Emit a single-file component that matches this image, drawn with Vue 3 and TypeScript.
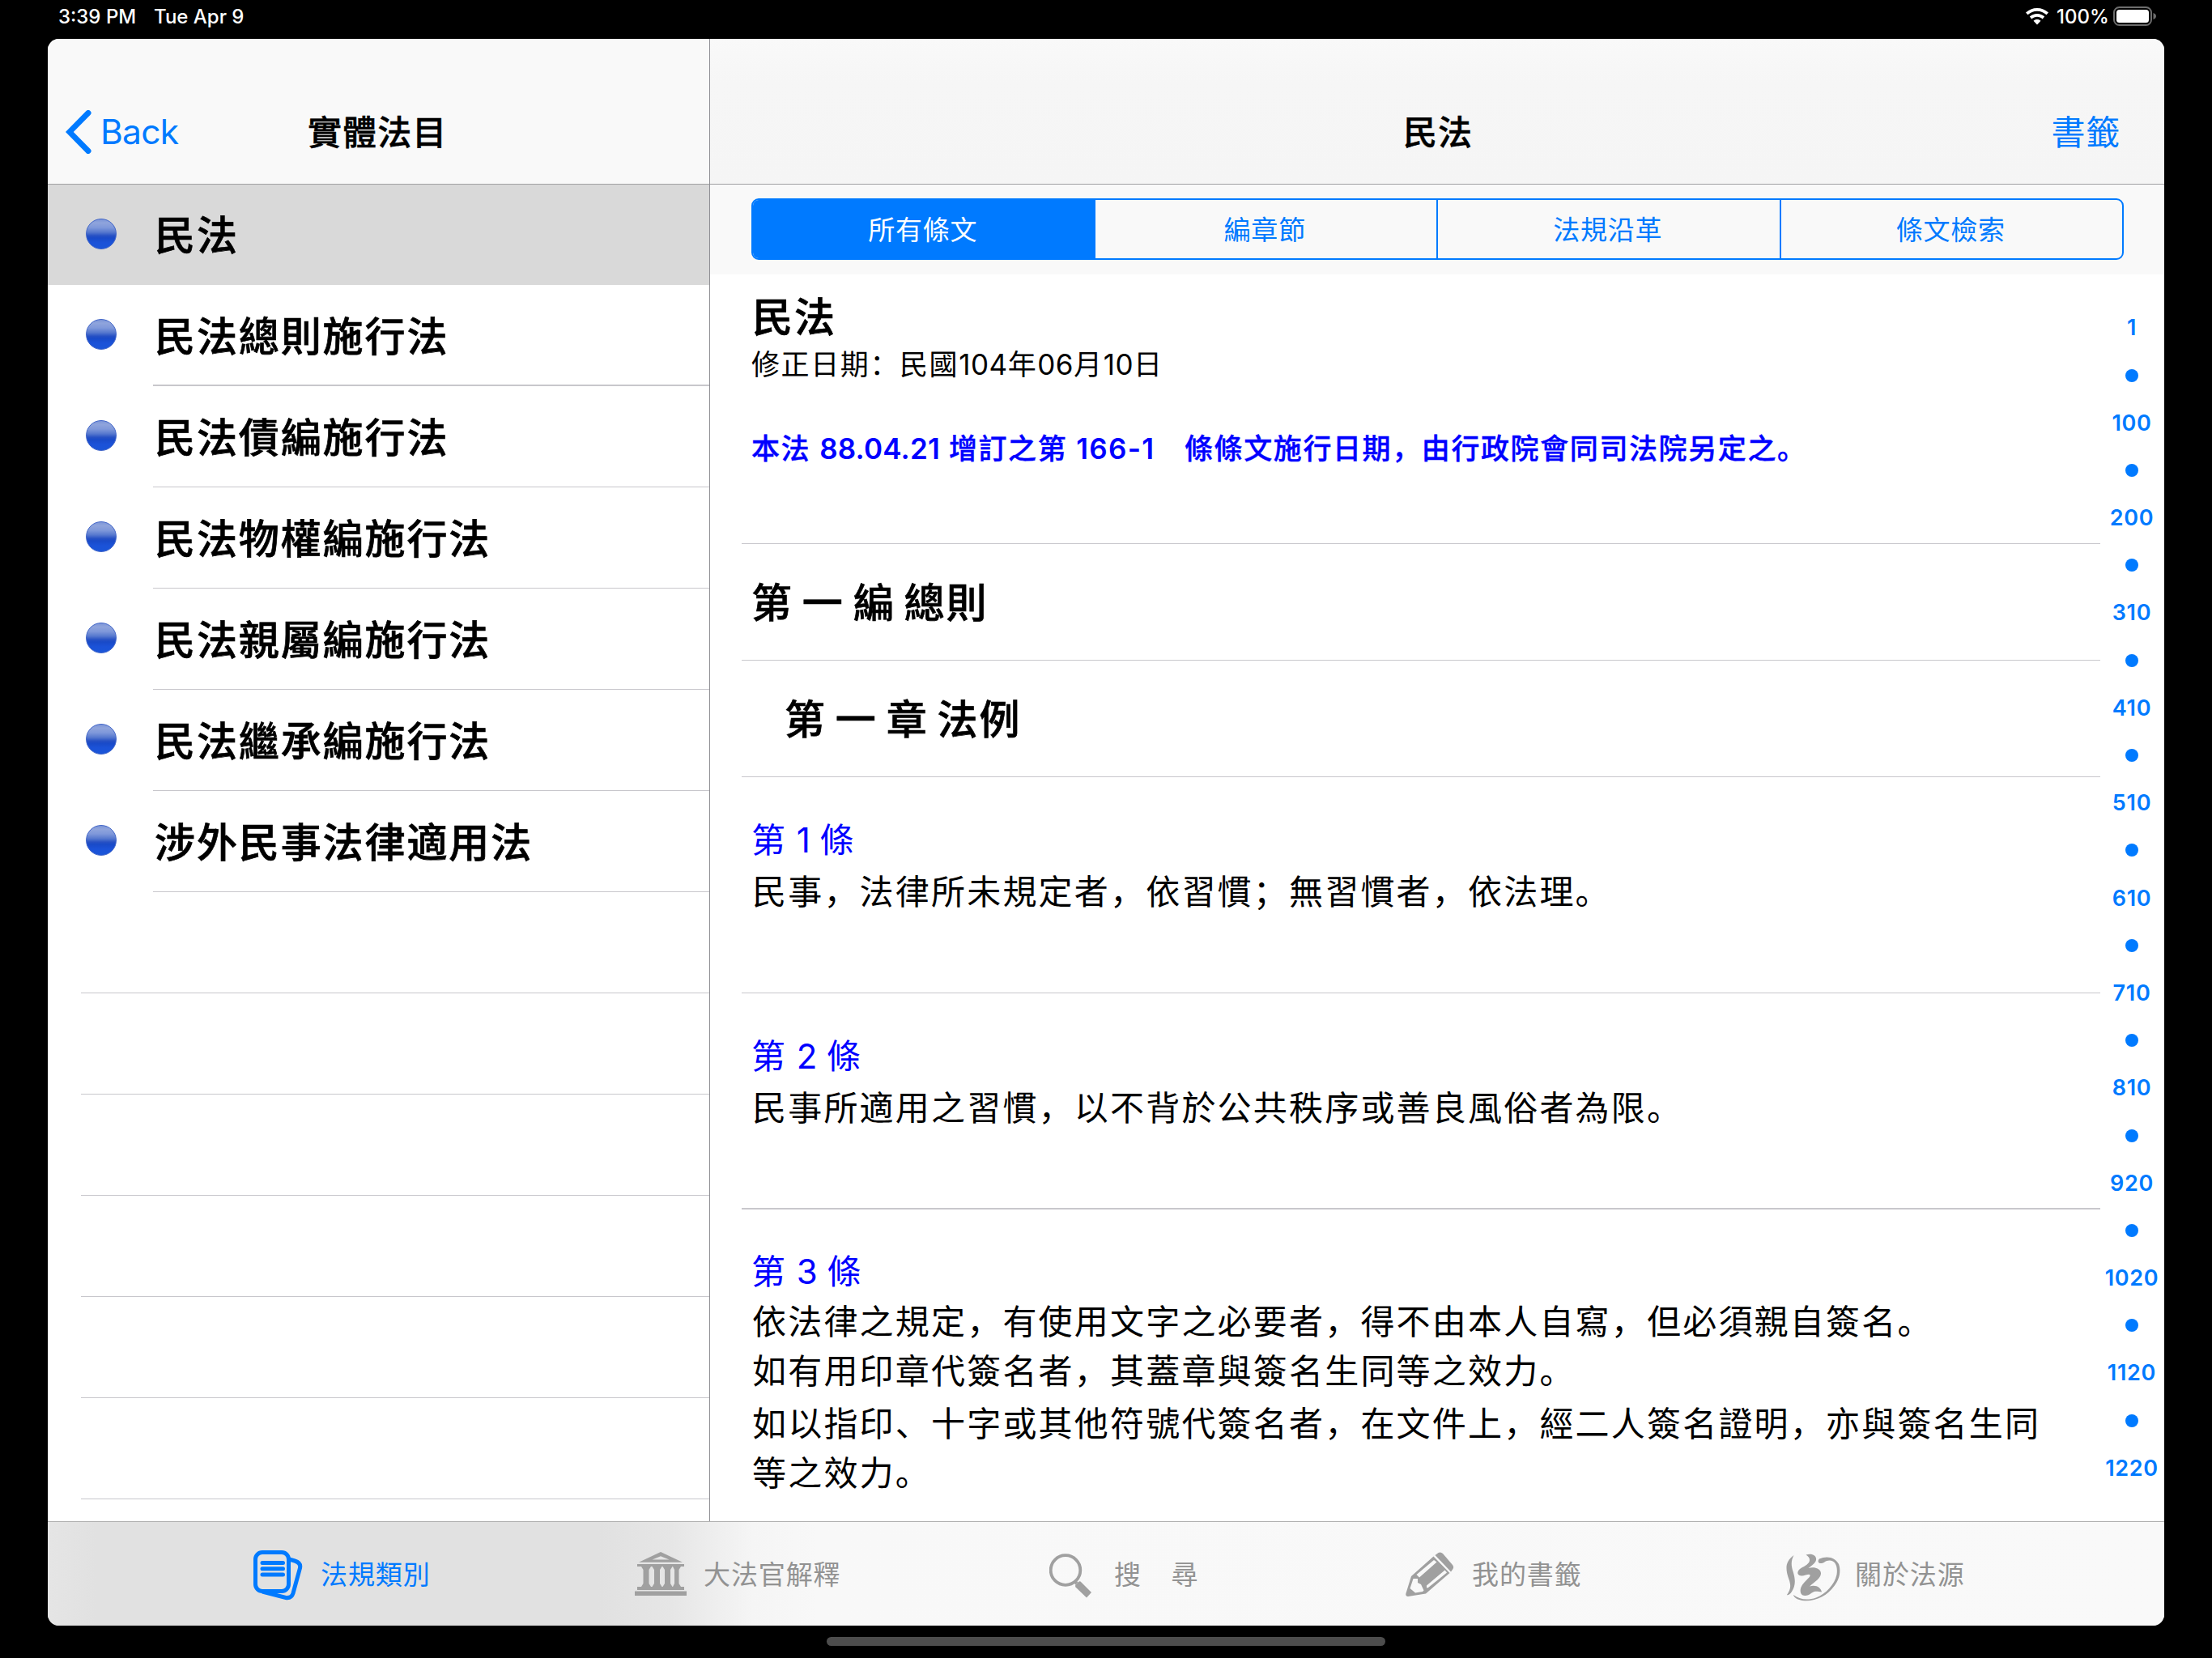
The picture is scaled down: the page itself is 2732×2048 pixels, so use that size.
<script setup lang="ts">
interface Article {
  title: string
  lines: string[]
}

const laws: string[] = [
  '民法',
  '民法總則施行法',
  '民法債編施行法',
  '民法物權編施行法',
  '民法親屬編施行法',
  '民法繼承編施行法',
  '涉外民事法律適用法',
]
const emptyRows = 6

const segments: string[] = ['所有條文', '編章節', '法規沿革', '條文檢索']

const articles: Article[] = [
  { title: '1', lines: ['民事，法律所未規定者，依習慣；無習慣者，依法理。'] },
  { title: '2', lines: ['民事所適用之習慣，以不背於公共秩序或善良風俗者為限。'] },
  {
    title: '3',
    lines: [
      '依法律之規定，有使用文字之必要者，得不由本人自寫，但必須親自簽名。',
      '如有用印章代簽名者，其蓋章與簽名生同等之效力。',
      '如以指印、十字或其他符號代簽名者，在文件上，經二人簽名證明，亦與簽名生同等之效力。',
    ],
  },
]

const stops = [1, 100, 200, 310, 410, 510, 610, 710, 810, 920, 1020, 1120, 1220]
const indexItems: (number | null)[] = stops.flatMap((n, i) => (i ? [null, n] : [n]))
</script>

<template>
  <div class="device">
    <div class="status">
      <span class="time">3:39 PM</span>
      <span class="date">Tue Apr 9</span>
      <svg class="wifi" viewBox="0 0 28 21" width="28" height="21">
        <path fill="#fff" d="M14 0C8.700 0 3.800 2 0 5.600L2.500 8.300C5.600 5.400 9.600 3.700 14 3.700S22.400 5.400 25.500 8.300L28 5.600C24.200 2 19.300 0 14 0Z" />
        <path fill="#fff" d="M14 7C10.600 7 7.300 8.300 4.800 10.600L7.400 13.400C9.200 11.700 11.500 10.700 14 10.700S18.800 11.700 20.600 13.400L23.200 10.600C20.700 8.300 17.400 7 14 7Z" />
        <path fill="#fff" d="M14 14C12.300 14 10.700 14.600 9.500 15.700L14 20.500L18.500 15.700C17.300 14.600 15.700 14 14 14Z" />
      </svg>
      <span class="pct">100%</span>
      <svg class="battery" viewBox="0 0 54 24" width="54" height="24">
        <rect x="1" y="1" width="46" height="22" rx="6.500" fill="none" stroke="#6d6d6d" stroke-width="2" />
        <rect x="4" y="4" width="40" height="16" rx="3.500" fill="#fff" />
        <path d="M49.500 8C51.700 8.700 53 10 53 12S51.700 15.300 49.500 16Z" fill="#6d6d6d" />
      </svg>
    </div>

    <div class="window">
      <div class="split">
        <aside class="master">
          <header class="bar">
            <svg class="chevron" viewBox="0 0 32 54" width="32" height="54">
              <path d="M28 3.500L4.800 27L28 50.500" fill="none" stroke="#007aff" stroke-width="7" stroke-linecap="round" stroke-linejoin="miter" />
            </svg>
            <span class="back">Back</span>
            <span class="bar-title">實體法目</span>
          </header>
          <div v-for="(law, i) in laws" :key="law" class="row" :class="{ selected: i === 0, strong: i === 1 }">
            <i class="bullet"></i>
            <span class="law">{{ law }}</span>
          </div>
          <div v-for="n in emptyRows" :key="n" class="blank"></div>
        </aside>

        <main class="detail">
          <header class="bar detail-bar">
            <span class="detail-title">民法</span>
            <span class="bookmark">書籤</span>
          </header>
          <div class="segbar">
            <div class="seg">
              <span v-for="(s, i) in segments" :key="s" :class="{ on: i === 0 }">{{ s }}</span>
            </div>
          </div>
          <div class="body">
            <div class="content">
              <section class="cell intro">
                <h1>民法</h1>
                <p class="amended">修正日期：民國<b>104</b>年<b>06</b>月<b>10</b>日</p>
                <p class="note">本法 <b>88.04.21</b> 增訂之第 <b class="wide">166-1</b>　條條文施行日期，由行政院會同司法院另定之。</p>
              </section>
              <section class="cell heading">第 一 編 總則</section>
              <section class="cell heading chapter">第 一 章 法例</section>
              <section v-for="a in articles" :key="a.title" class="cell article" :class="'a' + a.title">
                <h2>第 <b>{{ a.title }}</b> 條</h2>
                <p v-for="l in a.lines" :key="l">{{ l }}</p>
              </section>
            </div>
            <nav class="index">
              <span v-for="(n, i) in indexItems" :key="i">
                <template v-if="n !== null">{{ n }}</template>
                <i v-else></i>
              </span>
            </nav>
          </div>
        </main>
      </div>

      <footer class="tabs">
        <div class="tab t1">
          <svg viewBox="0 0 61 62" width="61" height="62" fill="none" stroke="#007aff">
            <path d="M44 11L51 13Q59 15.500 57.500 22L49 53Q47 59.500 40 58.500L11 51" stroke-width="5" />
            <rect x="2.500" y="2.500" width="41" height="48" rx="8.500" stroke-width="5" />
            <path d="M11 15.500H36.500M11 22.800H36.500M11 30H36.500" stroke-width="5" stroke-linecap="round" />
          </svg>
          <span>法規類別</span>
        </div>
        <div class="tab t2">
          <svg viewBox="0 0 64 54" width="64" height="54" fill="#a0a0a0">
            <path fill-rule="evenodd" d="M32 0L59 12.700H5ZM32 5.300L21.500 9.500H42.500Z" />
            <path d="M3 15H61V18H3ZM3 43H61V47H3Z" />
            <path d="M8 18H20L17.500 22V39L20 43H8L10.500 39V22ZM21.500 18H33.500L31 22V39L33.500 43H21.500L24 39V22ZM34.500 18H46.500L44 22V39L46.500 43H34.500L37 39V22ZM47 18H57L54.500 22V39L57 43H47L49 39V22Z" />
            <path d="M0 48.500H64V54H0Z" />
          </svg>
          <span>大法官解釋</span>
        </div>
        <div class="tab t3">
          <svg viewBox="0 0 52 55" width="52" height="55">
            <circle cx="20" cy="20.500" r="18.300" fill="none" stroke="#a0a0a0" stroke-width="3.800" />
            <path d="M31 34L34 37" stroke="#a0a0a0" stroke-width="4" />
            <path d="M38.500 34.500L52 48L46 54.500L32.500 41.500Q31.500 40 32.500 38.500L36 35Q37.300 33.800 38.500 34.500Z" fill="#a0a0a0" />
          </svg>
          <span>搜　尋</span>
        </div>
        <div class="tab t4">
          <svg viewBox="0 0 60 56" width="60" height="56" fill="#a0a0a0">
            <path d="M36.500 4L40.500 1Q43.500 -0.500 46 2L58 16Q60 18.500 58.500 21L56 24.500Z" />
            <path fill-rule="evenodd" d="M34.500 5.500L54.500 26L25 51.500L3 55Q-0.500 55 0.500 51L7 30ZM35 10L13.500 28L17 31.500L38.500 12.500ZM48.500 22.500L26 41.500V44.500L28 44L51 25.500ZM9.500 33L5.500 45L12 50.500L21 49L22.500 47.500L19 40L15 38V33Z" />
          </svg>
          <span>我的書籤</span>
        </div>
        <div class="tab t5">
          <svg viewBox="0 0 68 60" width="68" height="60" fill="#a0a0a0">
            <path d="M10.500 2C7 9 7 14 9.500 22C13 33 12.500 40 8 47C5.500 51 2.500 52 2 51C7 44 7 39 4.500 32C-1 17 1 9 10.500 2Z" />
            <path d="M25.500 1.500C33-1 39 2.500 38 8C37.500 11.500 33 14.500 28.500 18C35 16 43.500 18 44 24C44.500 30 37 34.500 30 40.500C38 38 44 42 45 47.500C39 46.500 36 46 32 49C28 52.500 20.500 53.500 19 48.500C17.500 43 21 38 25 34C29 30 31 28.500 30.500 26.500C29.500 24 22 29 17.500 27C13 24.500 16 19.500 21 17C27 14 30 11 30 8C30 5 28.500 3.500 25.500 1.500Z" />
            <path d="M42 6.500C52 2 62 5 66 13C69 21 67 32 60.500 40C50 55 30 62 15.500 56.500C12 55 10 52.500 10 51C17 56.500 27 58.500 38 54.500C50 50 61 38 63.500 26C65 16 62 8.500 54.500 8.500C49 8.500 48 12.500 43 12C40 11.500 40 8.500 42 6.500Z" />
          </svg>
          <span>關於法源</span>
        </div>
      </footer>
    </div>
    <div class="home"></div>
  </div>
</template>

<style>
html,
body {
  margin: 0;
  background: #000;
}
</style>

<style scoped>
.device {
  width: 2732px;
  height: 2048px;
  overflow: hidden;
  background: #000;
  font-family: 'Inter', 'Noto Sans CJK SC', sans-serif;
  color: #000;
  display: flex;
  flex-direction: column;
}
.device * {
  box-sizing: border-box;
}
b {
  font-weight: inherit;
  letter-spacing: 0;
}
svg {
  display: block;
  flex: none;
}
.status {
  height: 48px;
  flex: none;
  padding: 0 68px 8px 72px;
  display: flex;
  align-items: center;
  color: #fff;
  font-size: 24px;
  font-weight: 500;
  white-space: nowrap;
}
.time {
  width: 118px;
}
.wifi {
  margin-left: auto;
  margin-right: 10px;
}
.pct {
  width: 70px;
}
.window {
  width: 2614px;
  height: 1960px;
  flex: none;
  margin-left: 59px;
  border-radius: 14px;
  overflow: hidden;
  background: #fff;
  display: flex;
  flex-direction: column;
}
.split {
  height: 1831px;
  flex: none;
  display: flex;
}
.master {
  width: 818px;
  border-right: 1px solid #8e8e93;
  flex: none;
}
.bar {
  height: 180px;
  border-bottom: 1px solid #a0a0a2;
  background: #f9f9f9;
  display: flex;
  align-items: center;
  padding: 51px 0 0 22px;
  white-space: nowrap;
}
.back {
  margin-left: 11px;
  width: 256px;
  color: #007aff;
  font-size: 42.500px;
  letter-spacing: -0.700px;
  padding-bottom: 1px;
}
.bar-title,
.detail-title {
  font-size: 42px;
  letter-spacing: 1.100px;
  font-weight: 500;
  padding-bottom: 6px;
  -webkit-text-stroke: 0.500px currentColor;
}
.row {
  height: 125px;
  display: flex;
  align-items: center;
  padding-left: 47px;
  background: linear-gradient(#c8c7cc, #c8c7cc) 130px 100% / 100% 1px no-repeat;
}
.row.strong {
  background-size: 100% 2px;
}
.row.selected {
  height: 124px;
  background: #d9d9d9;
}
.bullet {
  width: 38px;
  height: 38px;
  border-radius: 50%;
  margin-bottom: 3px;
  border: 1px solid #3f64c8;
  background: linear-gradient(#7d96d8 0%, #8fa4dc 12%, #7f98da 28%, #5678ce 44%, #2751c4 56%, #194ac8 64%, #1b52d8 80%, #1a55d8 100%);
}
.law {
  margin-left: 47px;
  padding-bottom: 6px;
  font-size: 50px;
  letter-spacing: 1.900px;
  font-weight: 500;
  white-space: nowrap;
  -webkit-text-stroke: 0.700px currentColor;
}
.blank {
  height: 125px;
  margin-left: 41px;
  border-bottom: 1px solid #c8c7cc;
}
.detail {
  flex: 1;
  min-width: 0;
}
.detail-bar {
  background: linear-gradient(#f9f9f9 0%, #f6f6f6 30%, #f5f5f5 100%);
  padding: 51px 54px 0 856px;
  justify-content: space-between;
}
.bookmark {
  color: #007aff;
  font-size: 42px;
  letter-spacing: 0.700px;
  padding-bottom: 6px;
}
.segbar {
  height: 111px;
  background: #f9f9f9;
  padding: 17px 50px 0 51px;
}
.seg {
  height: 76px;
  border: 2px solid #007aff;
  border-radius: 9px;
  display: flex;
  overflow: hidden;
}
.seg span {
  flex: 1;
  display: flex;
  align-items: center;
  justify-content: center;
  color: #007aff;
  font-size: 33px;
  letter-spacing: 0.800px;
  padding: 0 2px 3px 0;
}
.seg span + span {
  border-left: 2px solid #007aff;
}
.seg .on {
  background: #007aff;
  color: #fff;
  margin-right: -1px;
}
.body {
  display: flex;
  height: 1540px;
}
.content {
  width: 1678px;
  margin-left: 39px;
  overflow: hidden;
}
.cell {
  border-bottom: 1px solid #c8c7cc;
  padding-left: 12px;
}
h1,
h2,
p {
  margin: 0;
  font-weight: 400;
}
.intro {
  height: 333px;
}
h1 {
  font-size: 50px;
  line-height: 60px;
  padding: 23px 0 0 1px;
  letter-spacing: 1.900px;
  font-weight: 500;
  -webkit-text-stroke: 0.700px currentColor;
}
.amended,
.note {
  font-size: 35px;
  line-height: 40px;
  letter-spacing: 1.600px;
  white-space: nowrap;
}
.amended {
  margin-top: 8px;
}
.amended b {
  letter-spacing: 0.500px;
}
.note {
  margin-top: 64px;
  color: #0000ff;
  font-weight: 500;
  -webkit-text-stroke: 0.400px currentColor;
}
.note b {
  font-weight: 600;
  letter-spacing: 0.200px;
  -webkit-text-stroke: 0;
}
.note b.wide {
  letter-spacing: 1.300px;
}
.heading {
  height: 144px;
  font-size: 50px;
  line-height: 146px;
  letter-spacing: 1.900px;
  word-spacing: -4.300px;
  font-weight: 500;
  white-space: nowrap;
  -webkit-text-stroke: 0.700px currentColor;
}
.heading.chapter {
  padding-left: 53px;
}
.article {
  height: 267px;
  padding-top: 46px;
}
.article h2 {
  color: #0000ff;
  font-size: 42px;
  line-height: 64px;
  letter-spacing: 2.200px;
  word-spacing: -2.400px;
}
.article p {
  width: 1620px;
  padding-left: 1px;
  font-size: 42px;
  line-height: 64px;
  letter-spacing: 2.200px;
}
.article.a2 {
  border-bottom-width: 2px;
}
.article.a3 {
  height: 386px;
  padding-top: 45px;
  border: 0;
}
.article.a3 p {
  line-height: 61px;
  position: relative;
  top: -1px;
}
.article.a3 p:last-child {
  margin-top: 4px;
}
.index {
  flex: none;
  width: 78px;
  height: 1467px;
  margin-top: 36px;
  display: flex;
  flex-direction: column;
  color: #007aff;
  font-size: 27px;
  letter-spacing: 0.700px;
  font-weight: 600;
}
.index span {
  flex: 1;
  display: flex;
  align-items: center;
  justify-content: center;
  padding-top: 1px;
}
.index i {
  width: 16px;
  height: 16px;
  border-radius: 50%;
  background: #007aff;
}
.tabs {
  flex: none;
  height: 129px;
  border-top: 1px solid #b0b0b0;
  background: linear-gradient(90deg, #e5e5e5 0, #e1e1e1 60px, #e1e1e1 680px, #e6e6e6 770px, #f5f5f5 870px, #f8f8f8 950px, #f9f9f9 100%);
  display: flex;
  color: #929292;
  font-size: 33px;
  letter-spacing: 0.900px;
  line-height: 50px;
  white-space: nowrap;
}
.tab {
  display: flex;
  align-items: flex-start;
  flex: none;
}
.tab svg {
  margin-top: 37px;
}
.tab span {
  margin-top: 40px;
}
.t1 {
  margin-left: 254px;
  width: 471px;
  color: #007aff;
}
.t1 svg {
  margin-top: 35px;
  margin-right: 22px;
}
.t2 {
  width: 512px;
}
.t2 svg {
  margin-right: 21px;
}
.t3 {
  width: 440px;
}
.t3 span {
  letter-spacing: 2.300px;
}
.t3 svg {
  margin-top: 39px;
  margin-right: 28px;
}
.t4 {
  width: 469px;
}
.t4 svg {
  margin-right: 22px;
}
.t5 svg {
  margin-top: 39px;
  margin-right: 18px;
}
.home {
  width: 690px;
  height: 11px;
  border-radius: 5.500px;
  background: #4d4d4d;
  margin: 14px 0 0 1021px;
}
</style>
